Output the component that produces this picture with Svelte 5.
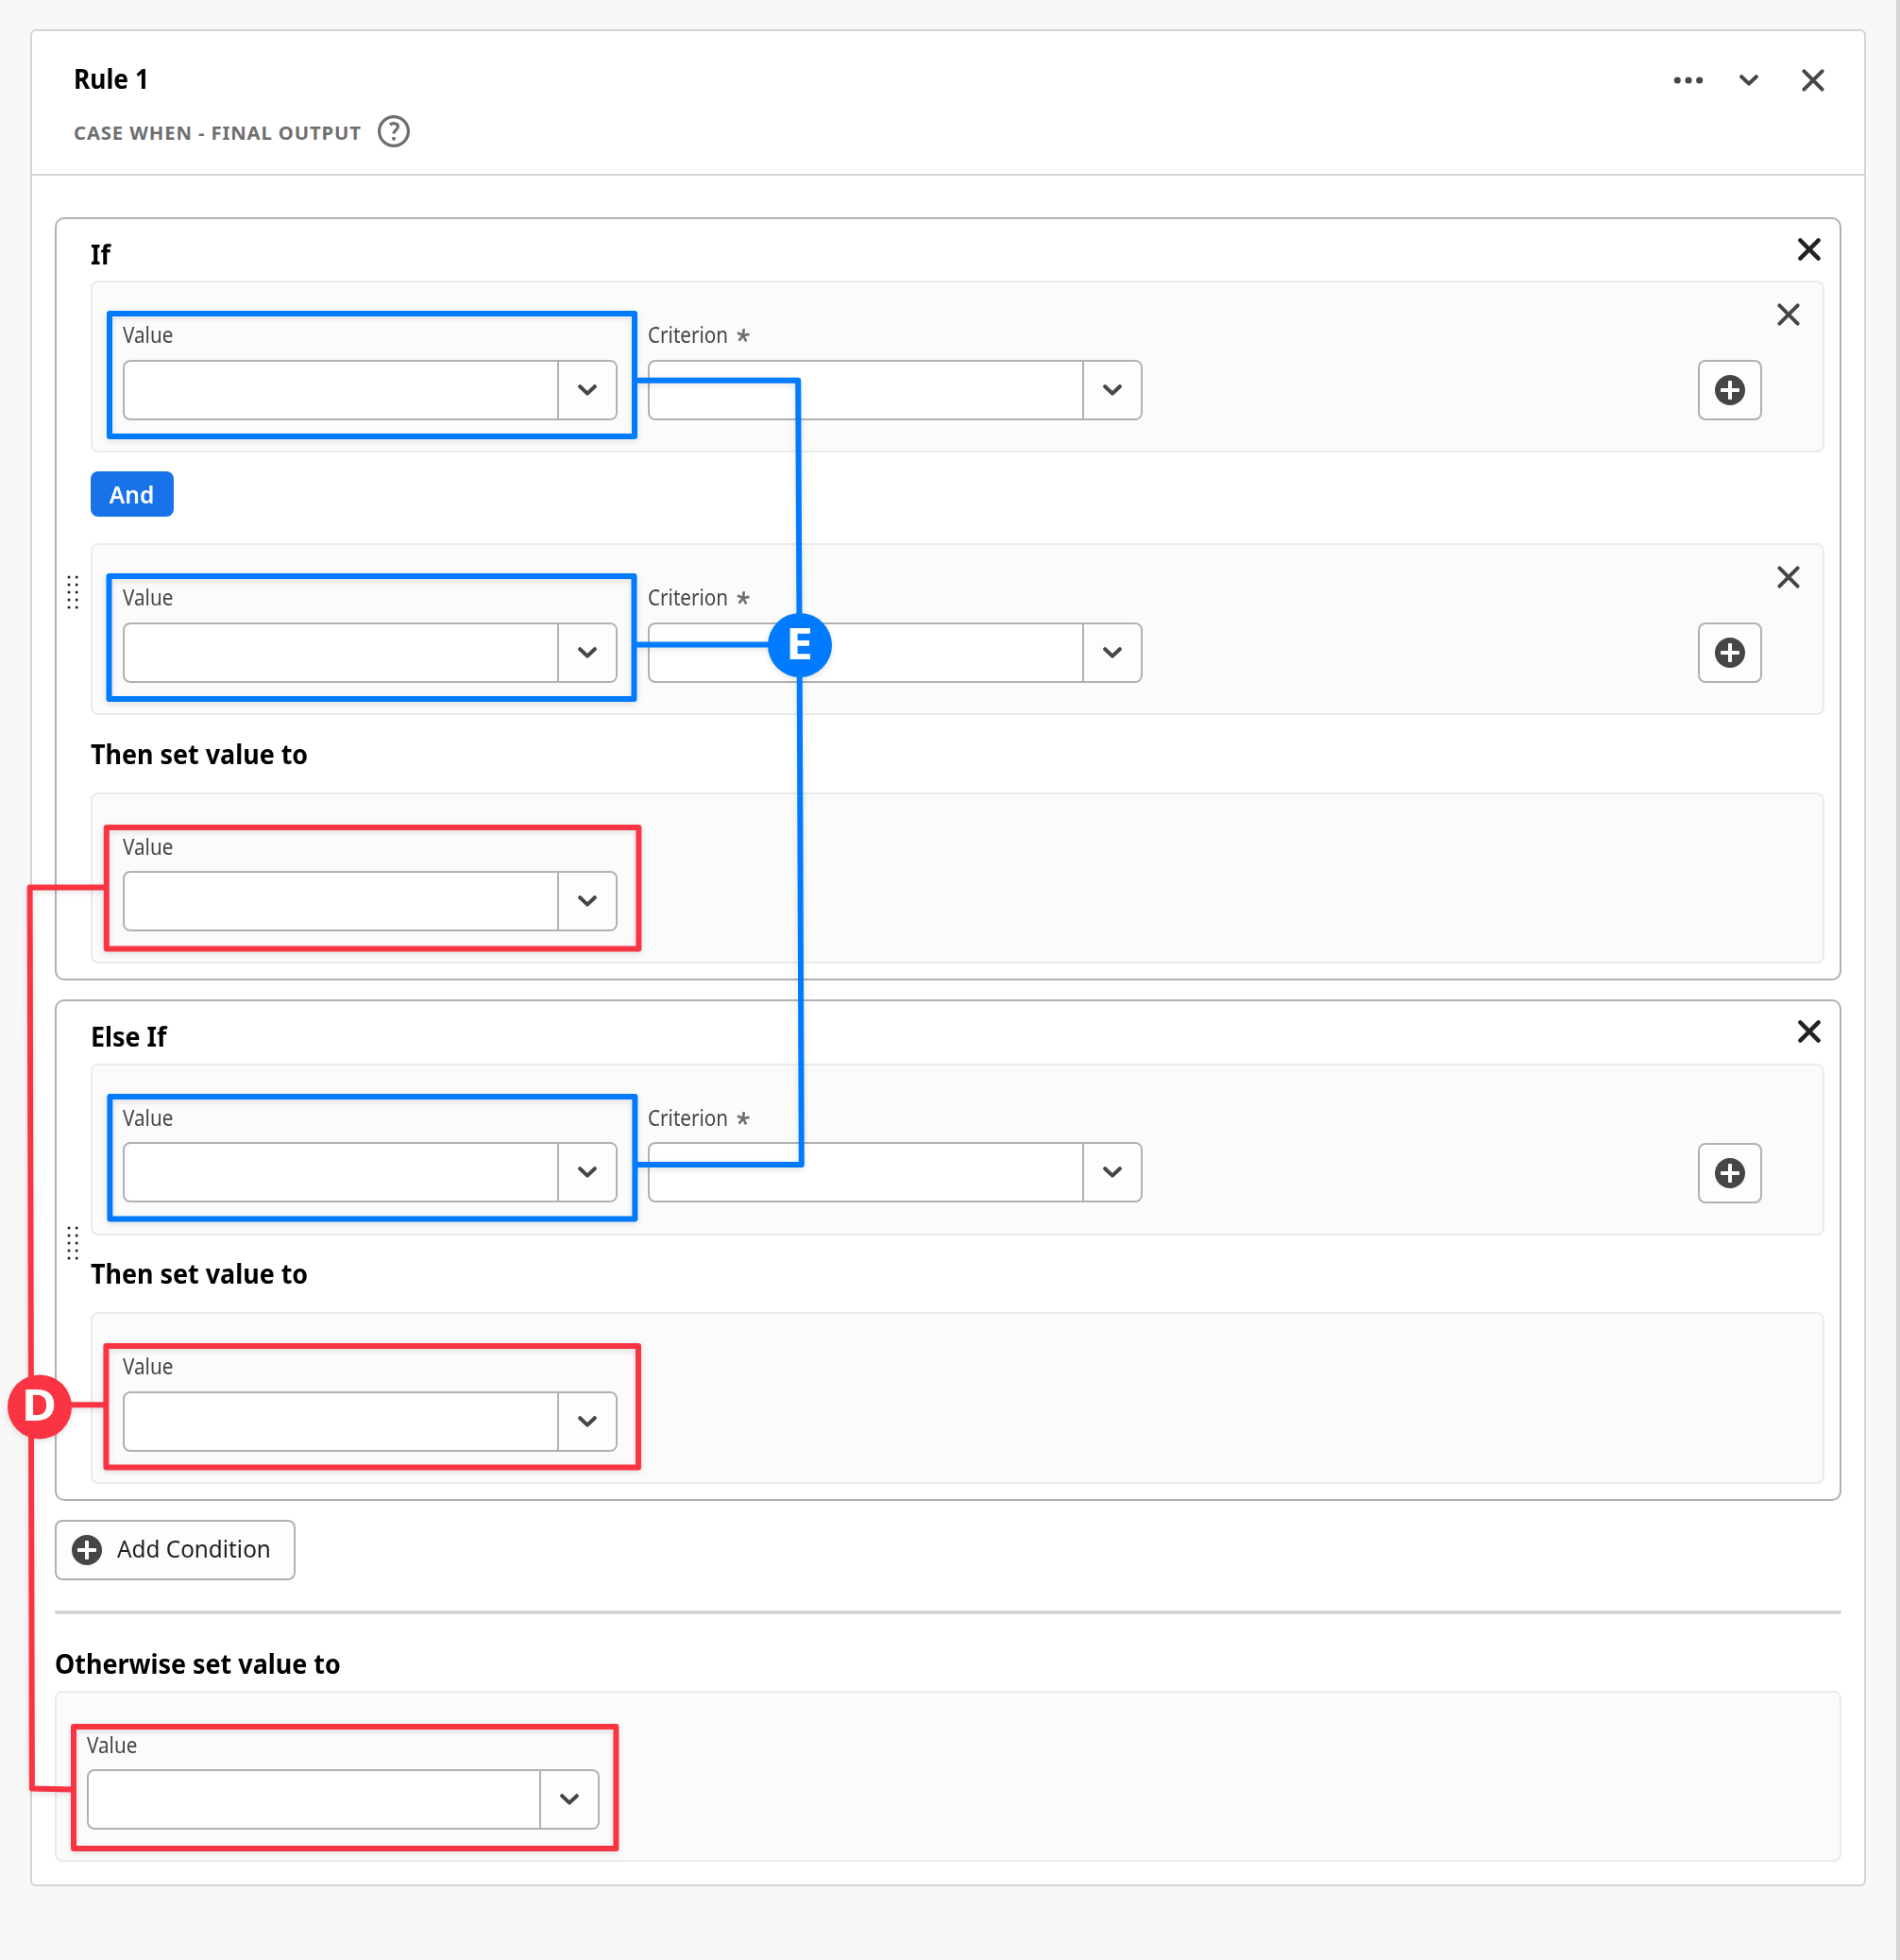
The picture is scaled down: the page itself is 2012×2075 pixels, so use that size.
<script>
  // Outlines drawn around the highlighted fields of each callout
  const blueBoxes = [
    { x: 116, y: 332, w: 556, h: 130 },
    { x: 115.5, y: 610, w: 556, h: 130 },
    { x: 116.4, y: 1161, w: 556, h: 129.5 },
  ];
  const redBoxes = [
    { x: 112.8, y: 876, w: 563.6, h: 128.6 },
    { x: 112.4, y: 1425, w: 563.6, h: 128.6 },
    { x: 78, y: 1828, w: 574.4, h: 129 },
  ];
  const gripRows = [2, 10, 18, 26, 34];
</script>

{#snippet cross(dark)}
  <svg class="cross" class:dark width="24" height="24" viewBox="0 0 24 24">
    <path d="M2.4 2.4 21.6 21.6M21.6 2.4 2.4 21.6" />
  </svg>
{/snippet}

{#snippet chevron()}
  <svg class="chevron" width="20" height="12" viewBox="0 0 20 12">
    <path d="M2.2 2.2 10 9.6 17.8 2.2" />
  </svg>
{/snippet}

{#snippet plus()}
  <svg class="plus" width="32" height="32" viewBox="0 0 32 32">
    <circle cx="16" cy="16" r="16" />
    <rect x="6" y="14" width="20" height="4" rx="1" />
    <rect x="14" y="6" width="4" height="20" rx="1" />
  </svg>
{/snippet}

{#snippet field(label, required, wide)}
  <div class="field" class:wide>
    <div class="label">
      <span class="label-text">{label}</span>
      {#if required}
        <svg class="star" width="16" height="16" viewBox="0 0 16 16">
          <path d="M8 8V1M8 8 14.3 6.2M8 8 11.8 14M8 8 4.2 14M8 8 1.7 6.2" transform="rotate(6 8 8)" />
        </svg>
      {/if}
    </div>
    <div class="combo">
      <div class="input"></div>
      <button class="toggle" aria-label="Open">{@render chevron()}</button>
    </div>
  </div>
{/snippet}

{#snippet criterionPanel(removable)}
  <div class="panel" class:fixed={!removable}>
    {@render field('Value', false, false)}
    {@render field('Criterion', true, false)}
    <button class="add" aria-label="Add">{@render plus()}</button>
    <div class="remove">
      {#if removable}{@render cross(false)}{/if}
    </div>
  </div>
{/snippet}

{#snippet grip()}
  <svg class="grip" width="14" height="36" viewBox="0 0 14 36">
    {#each gripRows as y}
      <circle cx="3" cy={y} r="1.5" />
      <circle cx="11.2" cy={y} r="1.5" />
    {/each}
  </svg>
{/snippet}

<div class="page">
  <main class="card">
    <header>
      <div class="titles">
        <h1>Rule 1</h1>
        <div class="sub">
          <span class="sub-text">CASE WHEN - FINAL OUTPUT</span>
          <svg width="34" height="34" viewBox="0 0 34 34">
            <circle class="ring" cx="17" cy="17" r="15.4" />
            <path class="hook" d="M12.9 9.9C14.4 8.9 16.1 8.5 17.7 8.7 20 8.9 21.4 10.2 21.4 12.1 21.4 15.4 17 15.9 17 19.6" />
            <circle class="point" cx="17" cy="24.8" r="2" />
          </svg>
        </div>
      </div>
      <div class="actions">
        <svg class="more" width="32" height="8" viewBox="0 0 32 8">
          <circle cx="4.3" cy="4" r="3.6" />
          <circle cx="16" cy="4" r="3.6" />
          <circle cx="27.7" cy="4" r="3.6" />
        </svg>
        {@render chevron()}
        {@render cross(false)}
      </div>
    </header>

    <div class="body">
      <section class="group">
        {@render grip()}
        <div class="content">
          <div class="group-head">
            <h2>If</h2>
            {@render cross(true)}
          </div>
          {@render criterionPanel(true)}
          <button class="and"><span>And</span></button>
          {@render criterionPanel(true)}
          <h2 class="then">Then set value to</h2>
          <div class="panel short">{@render field('Value', false, false)}</div>
        </div>
      </section>

      <section class="group">
        {@render grip()}
        <div class="content">
          <div class="group-head tall">
            <h2>Else If</h2>
            {@render cross(true)}
          </div>
          {@render criterionPanel(false)}
          <h2 class="then tight">Then set value to</h2>
          <div class="panel">{@render field('Value', false, false)}</div>
        </div>
      </section>

      <button class="add-condition">
        {@render plus()}
        <span>Add Condition</span>
      </button>
      <div class="divider"></div>
      <h2 class="otherwise">Otherwise set value to</h2>
      <div class="panel short">{@render field('Value', false, true)}</div>
    </div>
  </main>

  <!-- Callouts laid over the form -->
  <svg class="callouts" width="2012" height="2075" viewBox="0 0 2012 2075">
    <path class="smudge" d="M849 312 942 325A20 20 0 1 1 925 352L849 340A14 14 0 0 1 849 312Z" />
    <g class="blue">
      <path d="M674 402.8H845.2L846.6 683 848.8 1233H674" />
      <path d="M674 682.5H830" />
      {#each blueBoxes as b}
        <rect x={b.x} y={b.y} width={b.w} height={b.h} />
      {/each}
      <circle cx="847" cy="683" r="34" />
      <text x="832" y="698" textLength="29" lengthAdjust="spacingAndGlyphs">E</text>
    </g>
    <g class="red">
      <path d="M112 939.6H31.6L33.9 1893.6 76 1894.4" />
      <path d="M60 1487.2H112" />
      {#each redBoxes as b}
        <rect x={b.x} y={b.y} width={b.w} height={b.h} />
      {/each}
      <circle cx="42" cy="1489.4" r="34" />
      <text x="23" y="1504" textLength="37" lengthAdjust="spacingAndGlyphs">D</text>
    </g>
  </svg>
</div>

<style>
  :global(body) {
    background: #f8f8f8;
  }
  .page {
    position: relative;
    box-sizing: border-box;
    width: 2012px;
    height: 2075px;
    padding: 31px 32px 0;
    border-right: 4px solid #d5d5d5;
    background: #f8f8f8;
    font-family: 'Noto Sans', 'Open Sans', sans-serif;
    overflow: hidden;
  }
  .card {
    box-sizing: border-box;
    width: 1944px;
    height: 1966px;
    border: 2px solid #d5d5d5;
    border-radius: 6px;
    background: #fff;
  }
  header {
    box-sizing: border-box;
    height: 153px;
    padding: 32px 42px 0 44px;
    border-bottom: 2px solid #d5d5d5;
    display: flex;
    justify-content: space-between;
    align-items: flex-start;
  }
  h1,
  h2 {
    margin: 0;
    color: #000;
    font-size: 28.4px;
    font-weight: 700;
    line-height: 36px;
    transform-origin: 0 50%;
    transform: scaleX(0.947);
  }
  h1 {
    font-size: 29px;
    transform: scaleX(0.91);
  }
  .sub {
    display: flex;
    align-items: center;
    gap: 17px;
    margin-top: 21px;
    height: 34px;
  }
  .sub-text {
    color: #6e6e6e;
    font-size: 20.3px;
    font-weight: 700;
    letter-spacing: 0.88px;
    line-height: 34px;
    padding-top: 2px;
  }
  .ring,
  .hook {
    fill: none;
    stroke: #6e6e6e;
    stroke-width: 3.2;
  }
  .point {
    fill: #6e6e6e;
  }
  .actions {
    display: flex;
    align-items: center;
    height: 40px;
  }
  .actions .chevron {
    margin: 0 46px 0 38px;
  }
  .more {
    fill: #464646;
  }
  .cross,
  .chevron {
    fill: none;
    stroke: #464646;
    stroke-width: 4;
    stroke-linecap: round;
    stroke-linejoin: round;
    flex: none;
  }
  .cross {
    stroke-width: 3.9;
  }
  .cross.dark {
    margin-bottom: 2px;
    stroke: #222;
    stroke-width: 4.4;
  }
  .plus {
    fill: #464646;
    flex: none;
  }
  .plus rect {
    fill: #fff;
  }
  button {
    box-sizing: border-box;
    display: flex;
    align-items: center;
    justify-content: center;
    margin: 0;
    padding: 0;
    font: inherit;
  }
  .body {
    padding: 44px 24px 0;
  }
  .group {
    box-sizing: border-box;
    display: grid;
    grid-template-columns: 36px 1fr;
    padding: 0 16px 16px 0;
    border: 2px solid #b1b1b1;
    border-radius: 10px;
    margin-bottom: 20px;
  }
  .grip {
    align-self: center;
    margin: 1px 0 0 10px;
    fill: #222;
  }
  .group-head {
    display: flex;
    justify-content: space-between;
    align-items: center;
    height: 65px;
    padding-right: 4px;
  }
  .group-head.tall {
    height: 65px;
    padding-bottom: 1px;
  }
  .group-head h2 {
    padding-top: 9px;
  }
  .group-head.tall h2 {
    padding-top: 8px;
  }
  .panel {
    box-sizing: border-box;
    display: flex;
    align-items: flex-end;
    gap: 32px;
    height: 182px;
    padding: 0 0 32px 32px;
    border: 2px solid #ebebeb;
    border-radius: 8px;
    background: #fbfbfb;
  }
  .panel.short {
    height: 181px;
  }
  .panel.fixed .field {
    margin-bottom: 1px;
  }
  .field {
    width: 524px;
  }
  .field.wide {
    width: 543px;
  }
  .label {
    display: flex;
    align-items: center;
    height: 24px;
    margin-bottom: 14px;
  }
  .short .label,
  .fixed .label {
    margin-bottom: 13px;
  }
  .label-text {
    color: #464646;
    font-size: 22.7px;
    line-height: 24px;
    transform-origin: 0 50%;
    transform: scaleX(0.91);
  }
  .star {
    margin: -1px 0 0 -1px;
    fill: none;
    stroke: #6e6e6e;
    stroke-width: 2.6;
  }
  .combo {
    box-sizing: border-box;
    display: flex;
    height: 64px;
    border: 2px solid #b1b1b1;
    border-radius: 8px;
    background: #fff;
    overflow: hidden;
  }
  .input {
    flex: 1;
  }
  .toggle {
    width: 62px;
    border: 0;
    border-left: 2px solid #b1b1b1;
    background: #fdfdfd;
  }
  .add {
    width: 68px;
    height: 64px;
    margin-left: auto;
    border: 2px solid #b1b1b1;
    border-radius: 8px;
    background: #fdfdfd;
  }
  .remove {
    align-self: flex-start;
    width: 48px;
    margin: 22px 0 0 -16px;
  }
  .and {
    width: 88px;
    height: 48px;
    margin: 20px 0 28px;
    padding-right: 1px;
    border: 0;
    border-radius: 8px;
    background: #1873e8;
    color: #fff;
    font-size: 25.4px;
    font-weight: 600;
    line-height: 48px;
  }
  .and span {
    transform: scaleX(0.965);
  }
  .then {
    line-height: 82px;
  }
  .then.tight {
    line-height: 81px;
  }
  .add-condition {
    width: 255px;
    height: 64px;
    padding-left: 16px;
    justify-content: flex-start;
    border: 2px solid #b1b1b1;
    border-radius: 8px;
    background: #fdfdfd;
    color: #222;
    font-size: 25.6px;
  }
  .add-condition span {
    margin-left: 16px;
    padding-bottom: 2px;
    line-height: 58px;
    white-space: nowrap;
    transform-origin: 0 50%;
    transform: scaleX(0.95);
  }
  .divider {
    height: 4px;
    margin-top: 32px;
    border-radius: 2px;
    background: #d5d5d5;
  }
  .otherwise {
    padding-top: 23px;
    line-height: 58px;
  }
  .callouts {
    position: absolute;
    left: 0;
    top: 0;
    pointer-events: none;
  }
  .callouts g {
    stroke-width: 6;
    stroke-linejoin: round;
    filter: drop-shadow(0 2px 3px rgba(0, 0, 0, 0.12));
  }
  .callouts path,
  .callouts rect {
    fill: none;
  }
  .callouts circle {
    stroke: none;
  }
  .callouts .smudge {
    fill: #fcfcfc;
  }
  .blue {
    stroke: #007aff;
  }
  .blue circle {
    fill: #007aff;
  }
  .red {
    stroke: #fa3442;
  }
  .red circle {
    fill: #fa3442;
  }
  .callouts text {
    fill: #fff;
    stroke: none;
    font-size: 46px;
    font-weight: 700;
  }
</style>
